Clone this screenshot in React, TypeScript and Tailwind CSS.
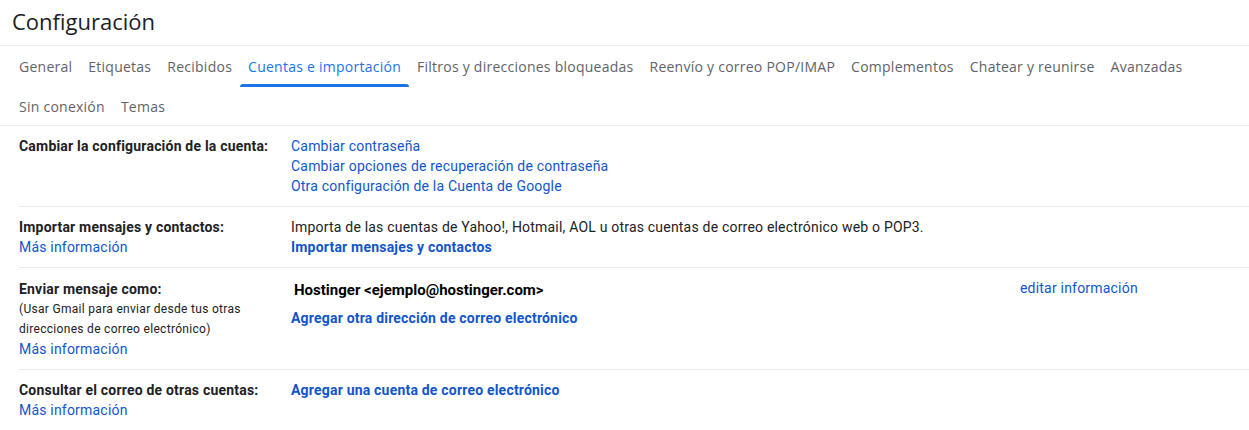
import React from "react";

const tabsRow1 = [
  "General",
  "Etiquetas",
  "Recibidos",
  "Cuentas e importación",
  "Filtros y direcciones bloqueadas",
  "Reenvío y correo POP/IMAP",
  "Complementos",
  "Chatear y reunirse",
  "Avanzadas",
];
const tabsRow2 = ["Sin conexión", "Temas"];

function Tab({ label, active }: { label: string; active?: boolean }) {
  return (
    <div
      className={
        "relative flex h-full items-center px-2 text-[14px] tracking-[0.25px] " +
        (active ? "text-[#1a73e8]" : "text-[#5f6368]")
      }
      style={{ fontFamily: "'Open Sans', sans-serif" }}
    >
      {label}
      {active && <div className="absolute bottom-0 left-0 right-0 h-[3px] rounded-t-[3px] bg-[#1a73e8]" />}
    </div>
  );
}

function Row({
  label,
  children,
  last,
}: {
  label: React.ReactNode;
  children: React.ReactNode;
  last?: boolean;
}) {
  return (
    <div className={"flex pt-[10px] pb-[10px] " + (last ? "" : "border-b border-[#e8eaed]")}>
      <div className="w-[272px] shrink-0">{label}</div>
      <div className="flex-1">{children}</div>
    </div>
  );
}

const link = "text-[#1155cc] cursor-pointer";
const boldLink = "text-[#1155cc] font-bold cursor-pointer";

export default function App() {
  return (
    <div
      className="w-[1249px] h-[430px] overflow-hidden bg-white text-[#202124]"
      style={{ fontFamily: "Roboto, 'Liberation Sans', sans-serif" }}
    >
      <div
        className="flex h-[46px] items-center border-b border-[#e8eaed] pl-[12px] pb-[2px] text-[22px] text-[#202124]"
        style={{ fontFamily: "'Open Sans', sans-serif" }}
      >
        Configuración
      </div>
      <div className="border-b border-[#e8eaed] pl-[11px]">
        <div className="flex h-[41px]">
          {tabsRow1.map((t) => (
            <Tab key={t} label={t} active={t === "Cuentas e importación"} />
          ))}
        </div>
        <div className="flex h-[38px]">
          {tabsRow2.map((t) => (
            <Tab key={t} label={t} />
          ))}
        </div>
      </div>
      <div className="ml-[19px] text-[14px] leading-[20px] tracking-[0.2px]">
        <Row label={<div className="font-bold">Cambiar la configuración de la cuenta:</div>}>
          <div className={link}>Cambiar contraseña</div>
          <div className={link}>Cambiar opciones de recuperación de contraseña</div>
          <div className={link}>Otra configuración de la Cuenta de Google</div>
        </Row>
        <Row
          label={
            <>
              <div className="font-bold">Importar mensajes y contactos:</div>
              <div className={link}>Más información</div>
            </>
          }
        >
          <div>Importa de las cuentas de Yahoo!, Hotmail, AOL u otras cuentas de correo electrónico web o POP3.</div>
          <div className={boldLink}>Importar mensajes y contactos</div>
        </Row>
        <div className="flex border-b border-[#e8eaed] pt-[11px] pb-[10px]">
          <div className="w-[272px] shrink-0">
            <div className="font-bold">Enviar mensaje como:</div>
            <div className="text-[12px] tracking-[0.3px]">(Usar Gmail para enviar desde tus otras</div>
            <div className="text-[12px] tracking-[0.3px]">direcciones de correo electrónico)</div>
            <div className={link}>Más información</div>
          </div>
          <div className="flex-1">
            <div className="flex">
              <div className="w-[729px] pl-[3px] pt-[1px] text-[15px] font-bold tracking-normal text-black">
                Hostinger &lt;ejemplo@hostinger.com&gt;
              </div>
              <div className={link + " -mt-[1px]"}>editar información</div>
            </div>
            <div className={boldLink + " mt-[8px]"}>Agregar otra dirección de correo electrónico</div>
          </div>
        </div>
        <Row
          last
          label={
            <>
              <div className="font-bold">Consultar el correo de otras cuentas:</div>
              <div className={link}>Más información</div>
            </>
          }
        >
          <div className={boldLink}>Agregar una cuenta de correo electrónico</div>
        </Row>
      </div>
    </div>
  );
}
